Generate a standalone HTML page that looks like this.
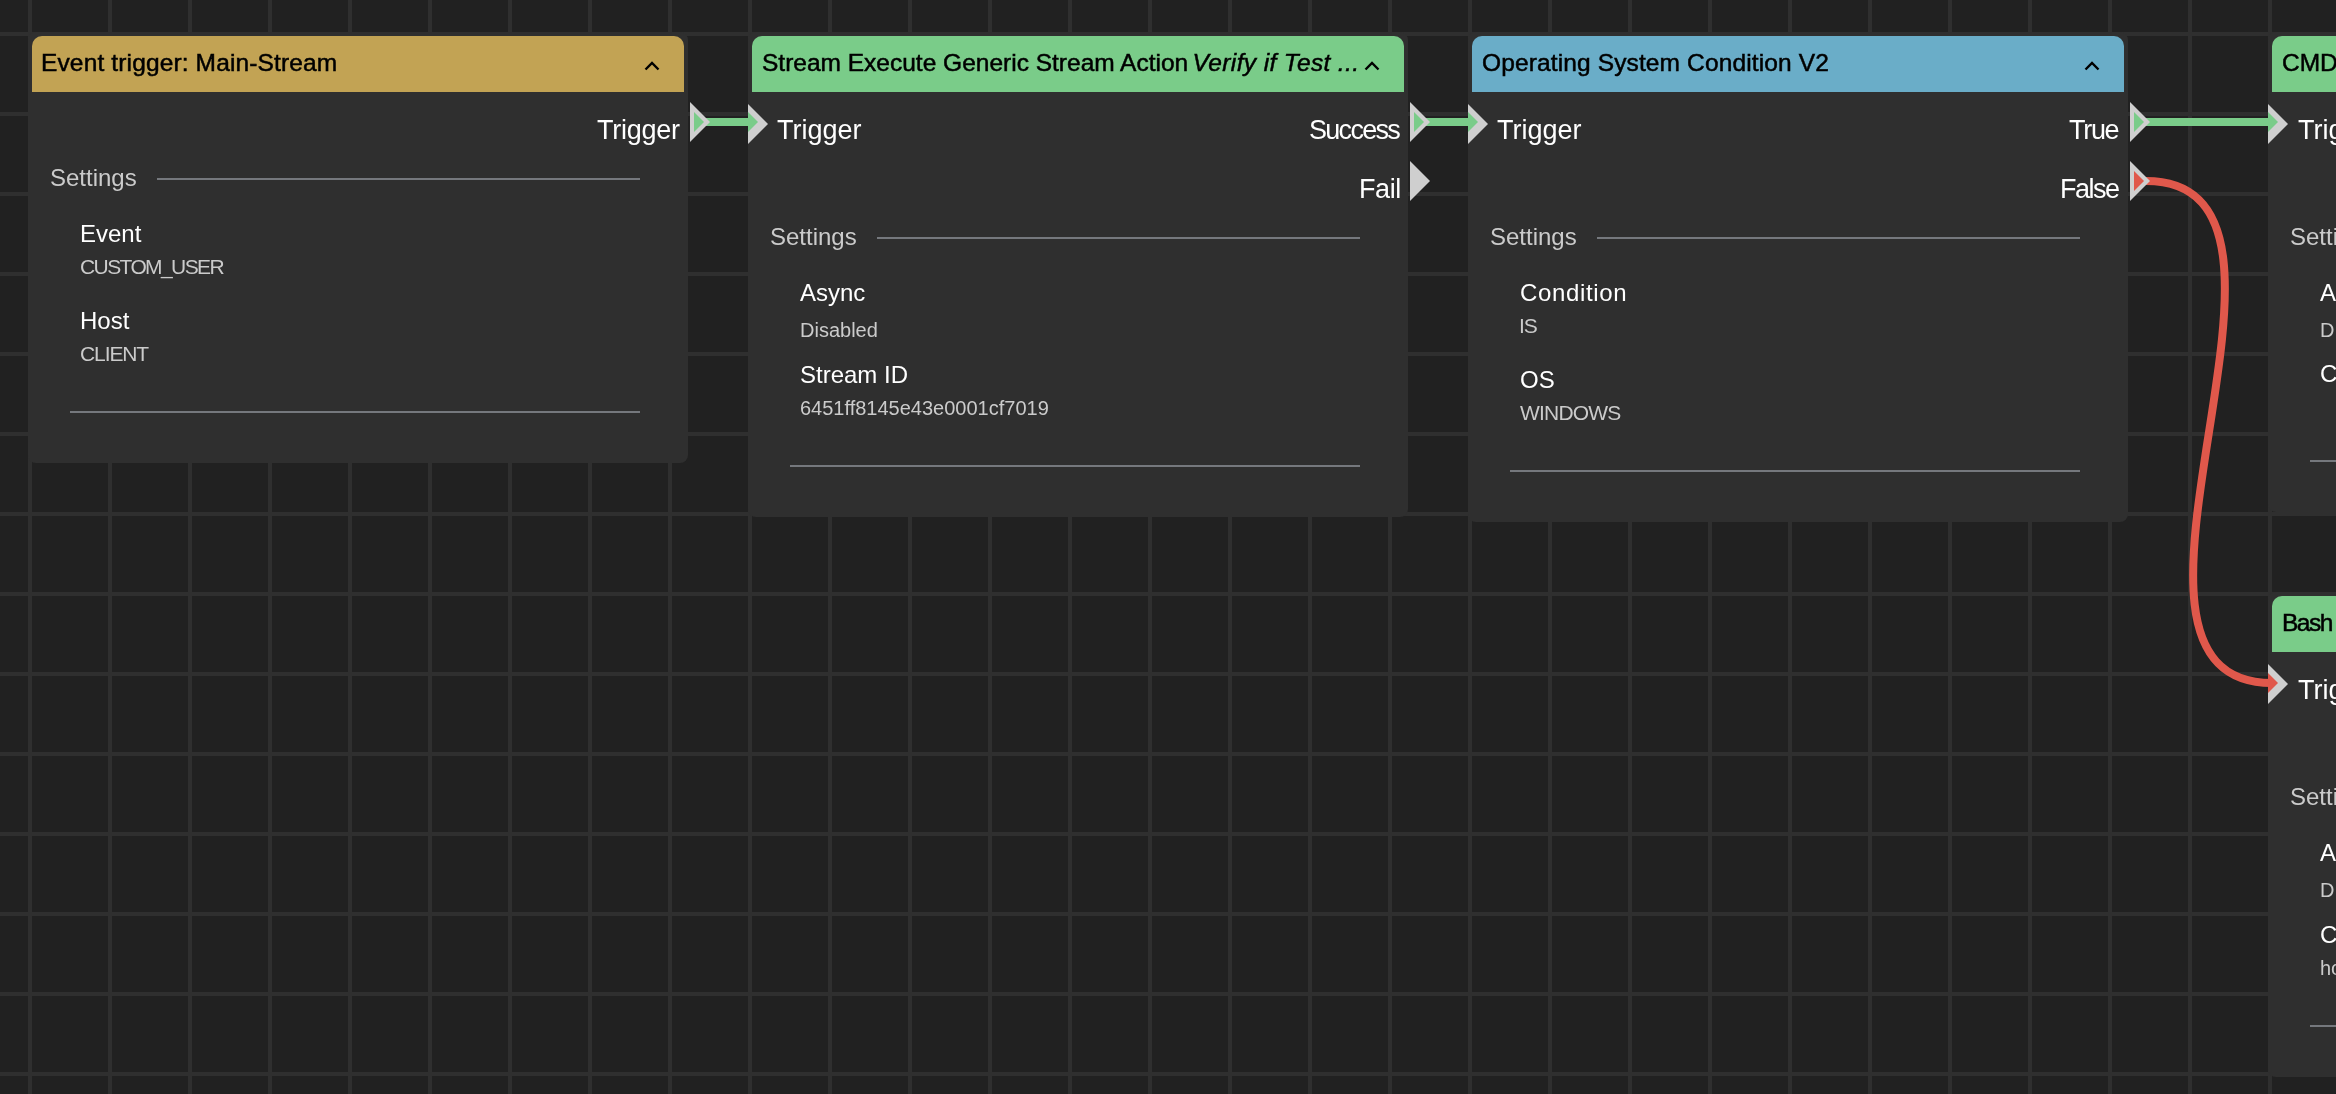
<!DOCTYPE html>
<html><head><meta charset="utf-8"><style>
html,body{margin:0;padding:0;width:2336px;height:1094px;overflow:hidden;background:#212121;}
body{position:relative;font-family:"Liberation Sans",sans-serif;
background-color:#212121;
background-image:linear-gradient(to right,#2f2f2f 0,#2f2f2f 4px,transparent 4px),linear-gradient(to bottom,#2f2f2f 0,#2f2f2f 4px,transparent 4px);
background-size:80px 80px;background-position:28px 32px;}
.t{position:absolute;white-space:nowrap;will-change:transform;}
svg{position:absolute;left:0;top:0;}
</style></head><body>
<div style="position:absolute;left:28px;top:32px;width:660px;height:431px;background:#2f2f2f;border-radius:8px"></div><div style="position:absolute;left:32px;top:36px;width:652px;height:56px;background:#c2a354;border-radius:10px 10px 0 0"></div><div class="t" style="left:41.3px;top:51.26px;font-size:24.5px;line-height:24.5px;color:#000;-webkit-text-stroke:0.5px #000;letter-spacing:0.14px">Event trigger: Main-Stream</div><div class="t" style="left:597.3px;top:117.14px;font-size:27px;line-height:27px;color:#ffffff;letter-spacing:-0.25px">Trigger</div><div class="t" style="left:50px;top:165.68px;font-size:24px;line-height:24px;color:#cbcbcb;">Settings</div><div style="position:absolute;left:157px;top:178px;width:483px;height:2px;background:#75787d;"></div><div class="t" style="left:80px;top:221.68px;font-size:24px;line-height:24px;color:#ffffff;">Event</div><div class="t" style="left:80px;top:255.72px;font-size:21px;line-height:21px;color:#cbcbcb;letter-spacing:-1.6px">CUSTOM_USER</div><div class="t" style="left:80px;top:308.68px;font-size:24px;line-height:24px;color:#ffffff;">Host</div><div class="t" style="left:80px;top:342.72px;font-size:21px;line-height:21px;color:#cbcbcb;letter-spacing:-1.1px">CLIENT</div><div style="position:absolute;left:70px;top:411px;width:570px;height:2px;background:#75787d;"></div><div style="position:absolute;left:748px;top:32px;width:660px;height:485px;background:#2f2f2f;border-radius:8px"></div><div style="position:absolute;left:752px;top:36px;width:652px;height:56px;background:#7acc89;border-radius:10px 10px 0 0"></div><div class="t" style="left:762px;top:51.26px;font-size:24.5px;line-height:24.5px;color:#000;-webkit-text-stroke:0.5px #000;">Stream Execute Generic Stream Action <i style="letter-spacing:0.37px;margin-left:-2.5px">Verify if Test ...</i></div><div class="t" style="left:777px;top:117.14px;font-size:27px;line-height:27px;color:#ffffff;">Trigger</div><div class="t" style="left:1309px;top:117.14px;font-size:27px;line-height:27px;color:#ffffff;letter-spacing:-1.7px">Success</div><div class="t" style="left:1358.5px;top:176.14px;font-size:27px;line-height:27px;color:#ffffff;letter-spacing:-0.4px">Fail</div><div class="t" style="left:770px;top:224.68px;font-size:24px;line-height:24px;color:#cbcbcb;">Settings</div><div style="position:absolute;left:877px;top:237px;width:483px;height:2px;background:#75787d;"></div><div class="t" style="left:800px;top:281.18px;font-size:24px;line-height:24px;color:#ffffff;">Async</div><div class="t" style="left:800px;top:320.07px;font-size:20px;line-height:20px;color:#cbcbcb;">Disabled</div><div class="t" style="left:800px;top:362.68px;font-size:24px;line-height:24px;color:#ffffff;">Stream ID</div><div class="t" style="left:800px;top:397.77px;font-size:20px;line-height:20px;color:#cbcbcb;">6451ff8145e43e0001cf7019</div><div style="position:absolute;left:790px;top:465px;width:570px;height:2px;background:#75787d;"></div><div style="position:absolute;left:1468px;top:32px;width:660px;height:490px;background:#2f2f2f;border-radius:8px"></div><div style="position:absolute;left:1472px;top:36px;width:652px;height:56px;background:#6aadc8;border-radius:10px 10px 0 0"></div><div class="t" style="left:1482px;top:51.26px;font-size:24.5px;line-height:24.5px;color:#000;-webkit-text-stroke:0.5px #000;letter-spacing:0.13px">Operating System Condition V2</div><div class="t" style="left:1497px;top:117.14px;font-size:27px;line-height:27px;color:#ffffff;">Trigger</div><div class="t" style="left:2069px;top:117.14px;font-size:27px;line-height:27px;color:#ffffff;letter-spacing:-1.3px">True</div><div class="t" style="left:2060px;top:176.14px;font-size:27px;line-height:27px;color:#ffffff;letter-spacing:-1.5px">False</div><div class="t" style="left:1490px;top:225.28px;font-size:24px;line-height:24px;color:#cbcbcb;">Settings</div><div style="position:absolute;left:1597px;top:237px;width:483px;height:2px;background:#75787d;"></div><div class="t" style="left:1520px;top:280.68px;font-size:24px;line-height:24px;color:#ffffff;letter-spacing:0.65px">Condition</div><div class="t" style="left:1519px;top:314.72px;font-size:21px;line-height:21px;color:#cbcbcb;letter-spacing:-1.2px">IS</div><div class="t" style="left:1520px;top:367.68px;font-size:24px;line-height:24px;color:#ffffff;">OS</div><div class="t" style="left:1520px;top:401.72px;font-size:21px;line-height:21px;color:#cbcbcb;letter-spacing:-0.8px">WINDOWS</div><div style="position:absolute;left:1510px;top:470px;width:570px;height:2px;background:#75787d;"></div><div style="position:absolute;left:2268px;top:32px;width:660px;height:480px;background:#2f2f2f;border-radius:8px"></div><div style="position:absolute;left:2272px;top:36px;width:652px;height:56px;background:#7acc89;border-radius:10px 10px 0 0"></div><div class="t" style="left:2282px;top:51.26px;font-size:24.5px;line-height:24.5px;color:#000;-webkit-text-stroke:0.5px #000;">CMD Execute</div><div class="t" style="left:2297.5px;top:117.14px;font-size:27px;line-height:27px;color:#ffffff;">Trigger</div><div class="t" style="left:2290px;top:224.98px;font-size:24px;line-height:24px;color:#cbcbcb;">Settings</div><div style="position:absolute;left:2397px;top:237px;width:483px;height:2px;background:#75787d;"></div><div class="t" style="left:2320px;top:280.68px;font-size:24px;line-height:24px;color:#ffffff;">Async</div><div class="t" style="left:2320px;top:320.47px;font-size:20px;line-height:20px;color:#cbcbcb;">D</div><div class="t" style="left:2320px;top:362.38px;font-size:24px;line-height:24px;color:#ffffff;">Command</div><div style="position:absolute;left:2310px;top:460px;width:570px;height:2px;background:#75787d;"></div><div style="position:absolute;left:2268px;top:592px;width:660px;height:485px;background:#2f2f2f;border-radius:8px"></div><div style="position:absolute;left:2272px;top:596px;width:652px;height:56px;background:#7acc89;border-radius:10px 10px 0 0"></div><div class="t" style="left:2282px;top:611.26px;font-size:24.5px;line-height:24.5px;color:#000;-webkit-text-stroke:0.5px #000;"><span style="letter-spacing:-1.5px">Bash</span></div><div class="t" style="left:2297.5px;top:677.14px;font-size:27px;line-height:27px;color:#ffffff;">Trigger</div><div class="t" style="left:2290px;top:784.88px;font-size:24px;line-height:24px;color:#cbcbcb;">Settings</div><div style="position:absolute;left:2397px;top:797px;width:483px;height:2px;background:#75787d;"></div><div class="t" style="left:2320px;top:841.28px;font-size:24px;line-height:24px;color:#ffffff;">Async</div><div class="t" style="left:2320px;top:880.47px;font-size:20px;line-height:20px;color:#cbcbcb;">D</div><div class="t" style="left:2320px;top:922.68px;font-size:24px;line-height:24px;color:#ffffff;">Command</div><div class="t" style="left:2320px;top:958.27px;font-size:20px;line-height:20px;color:#cbcbcb;">hostname</div><div style="position:absolute;left:2310px;top:1025px;width:570px;height:2px;background:#75787d;"></div>
<svg width="2336" height="1094" viewBox="0 0 2336 1094">
<line x1="704" y1="122" x2="748" y2="122" stroke="#7acc89" stroke-width="8"/><line x1="1424" y1="122" x2="1468" y2="122" stroke="#7acc89" stroke-width="8"/><line x1="2144" y1="122" x2="2268" y2="122" stroke="#7acc89" stroke-width="8"/><path d="M2146,181 C2351,181 2067,683 2272,683" fill="none" stroke="#e0584b" stroke-width="8"/>
<polyline points="645.5,69.5 652,63 658.5,69.5" fill="none" stroke="#000" stroke-width="2.4"/><polyline points="1365.5,69.5 1372,63 1378.5,69.5" fill="none" stroke="#000" stroke-width="2.4"/><polyline points="2085.5,69.5 2092,63 2098.5,69.5" fill="none" stroke="#000" stroke-width="2.4"/><polyline points="2885.5,69.5 2892,63 2898.5,69.5" fill="none" stroke="#000" stroke-width="2.4"/><polyline points="2885.5,629.5 2892,623 2898.5,629.5" fill="none" stroke="#000" stroke-width="2.4"/><polygon points="690,102 710,122.0 690,142" fill="#cfcfcf"/><polygon points="694,112 704,122.0 694,132" fill="#7acc89"/><polygon points="748,104 768,124.0 748,144" fill="#cfcfcf"/><polygon points="1410,102 1430,122.0 1410,142" fill="#cfcfcf"/><polygon points="1414,112 1424,122.0 1414,132" fill="#7acc89"/><polygon points="1468,104 1488,124.0 1468,144" fill="#cfcfcf"/><polygon points="1410,161 1430,181.0 1410,201" fill="#cfcfcf"/><polygon points="2130,102 2150,122.0 2130,142" fill="#cfcfcf"/><polygon points="2134,112 2144,122.0 2134,132" fill="#7acc89"/><polygon points="2268,104 2288,124.0 2268,144" fill="#cfcfcf"/><polygon points="2130,161 2150,181.0 2130,201" fill="#cfcfcf"/><polygon points="2134,171 2144,181.0 2134,191" fill="#e0584b"/><polygon points="2268,664 2288,684.0 2268,704" fill="#cfcfcf"/>
<polygon points="748,112 758,122 748,132" fill="#7acc89"/><polygon points="1468,112 1478,122 1468,132" fill="#7acc89"/><polygon points="2268,112 2278,122 2268,132" fill="#7acc89"/><polygon points="2268,673 2278,683 2268,693" fill="#e0584b"/>
</svg>
</body></html>
